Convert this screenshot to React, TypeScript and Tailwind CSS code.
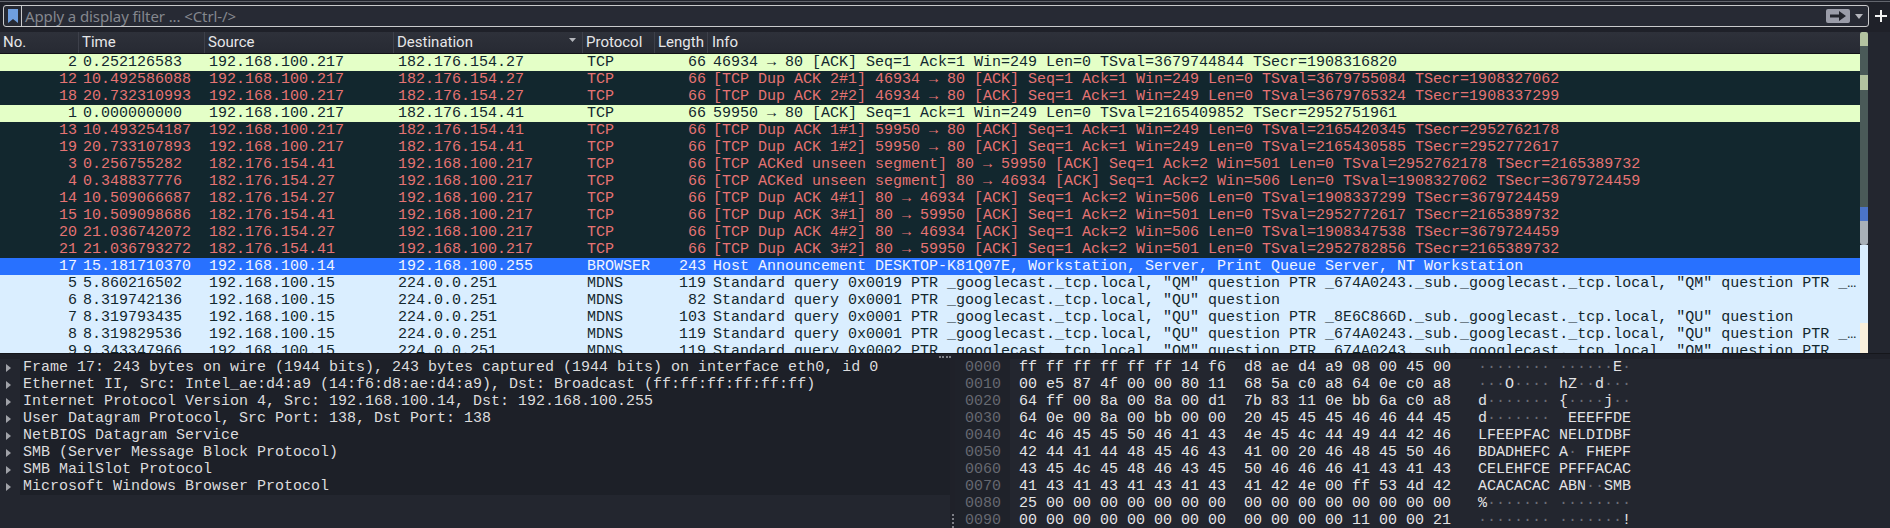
import React from 'react';

type Tone = 'ok' | 'bad' | 'sel' | 'mdns';

const TONES: Record<Tone, string> = {
  ok: 'bg-[#e4ffc7] text-[#12272e]',
  bad: 'bg-[#12272e] text-[#e57373]',
  sel: 'bg-[#2871ff] text-[#f0f4ff]',
  mdns: 'bg-[#daeeff] text-[#12272e]',
};

const ME = '192.168.100.217';
const A27 = '182.176.154.27';
const A41 = '182.176.154.41';
const MC = '224.0.0.251';
const S15 = '192.168.100.15';

const PACKETS: [Tone, string, string, string, string, string, string, string][] = [
  ['ok', '2', '0.252126583', ME, A27, 'TCP', '66', '46934 → 80 [ACK] Seq=1 Ack=1 Win=249 Len=0 TSval=3679744844 TSecr=1908316820'],
  ['bad', '12', '10.492586088', ME, A27, 'TCP', '66', '[TCP Dup ACK 2#1] 46934 → 80 [ACK] Seq=1 Ack=1 Win=249 Len=0 TSval=3679755084 TSecr=1908327062'],
  ['bad', '18', '20.732310993', ME, A27, 'TCP', '66', '[TCP Dup ACK 2#2] 46934 → 80 [ACK] Seq=1 Ack=1 Win=249 Len=0 TSval=3679765324 TSecr=1908337299'],
  ['ok', '1', '0.000000000', ME, A41, 'TCP', '66', '59950 → 80 [ACK] Seq=1 Ack=1 Win=249 Len=0 TSval=2165409852 TSecr=2952751961'],
  ['bad', '13', '10.493254187', ME, A41, 'TCP', '66', '[TCP Dup ACK 1#1] 59950 → 80 [ACK] Seq=1 Ack=1 Win=249 Len=0 TSval=2165420345 TSecr=2952762178'],
  ['bad', '19', '20.733107893', ME, A41, 'TCP', '66', '[TCP Dup ACK 1#2] 59950 → 80 [ACK] Seq=1 Ack=1 Win=249 Len=0 TSval=2165430585 TSecr=2952772617'],
  ['bad', '3', '0.256755282', A41, ME, 'TCP', '66', '[TCP ACKed unseen segment] 80 → 59950 [ACK] Seq=1 Ack=2 Win=501 Len=0 TSval=2952762178 TSecr=2165389732'],
  ['bad', '4', '0.348837776', A27, ME, 'TCP', '66', '[TCP ACKed unseen segment] 80 → 46934 [ACK] Seq=1 Ack=2 Win=506 Len=0 TSval=1908327062 TSecr=3679724459'],
  ['bad', '14', '10.509066687', A27, ME, 'TCP', '66', '[TCP Dup ACK 4#1] 80 → 46934 [ACK] Seq=1 Ack=2 Win=506 Len=0 TSval=1908337299 TSecr=3679724459'],
  ['bad', '15', '10.509098686', A41, ME, 'TCP', '66', '[TCP Dup ACK 3#1] 80 → 59950 [ACK] Seq=1 Ack=2 Win=501 Len=0 TSval=2952772617 TSecr=2165389732'],
  ['bad', '20', '21.036742072', A27, ME, 'TCP', '66', '[TCP Dup ACK 4#2] 80 → 46934 [ACK] Seq=1 Ack=2 Win=506 Len=0 TSval=1908347538 TSecr=3679724459'],
  ['bad', '21', '21.036793272', A41, ME, 'TCP', '66', '[TCP Dup ACK 3#2] 80 → 59950 [ACK] Seq=1 Ack=2 Win=501 Len=0 TSval=2952782856 TSecr=2165389732'],
  ['sel', '17', '15.181710370', '192.168.100.14', '192.168.100.255', 'BROWSER', '243', 'Host Announcement DESKTOP-K81Q07E, Workstation, Server, Print Queue Server, NT Workstation'],
  ['mdns', '5', '5.860216502', S15, MC, 'MDNS', '119', 'Standard query 0x0019 PTR _googlecast._tcp.local, "QM" question PTR _674A0243._sub._googlecast._tcp.local, "QM" question PTR _…'],
  ['mdns', '6', '8.319742136', S15, MC, 'MDNS', '82', 'Standard query 0x0001 PTR _googlecast._tcp.local, "QU" question'],
  ['mdns', '7', '8.319793435', S15, MC, 'MDNS', '103', 'Standard query 0x0001 PTR _googlecast._tcp.local, "QU" question PTR _8E6C866D._sub._googlecast._tcp.local, "QU" question'],
  ['mdns', '8', '8.319829536', S15, MC, 'MDNS', '119', 'Standard query 0x0001 PTR _googlecast._tcp.local, "QU" question PTR _674A0243._sub._googlecast._tcp.local, "QU" question PTR _…'],
  ['mdns', '9', '9.343347966', S15, MC, 'MDNS', '119', 'Standard query 0x0002 PTR _googlecast._tcp.local, "QM" question PTR _674A0243._sub._googlecast._tcp.local, "QM" question PTR _…'],
];

const DETAILS = [
  'Frame 17: 243 bytes on wire (1944 bits), 243 bytes captured (1944 bits) on interface eth0, id 0',
  'Ethernet II, Src: Intel_ae:d4:a9 (14:f6:d8:ae:d4:a9), Dst: Broadcast (ff:ff:ff:ff:ff:ff)',
  'Internet Protocol Version 4, Src: 192.168.100.14, Dst: 192.168.100.255',
  'User Datagram Protocol, Src Port: 138, Dst Port: 138',
  'NetBIOS Datagram Service',
  'SMB (Server Message Block Protocol)',
  'SMB MailSlot Protocol',
  'Microsoft Windows Browser Protocol',
];

const HEX = [
  ['0000', 'ff ff ff ff ff ff 14 f6', 'd8 ae d4 a9 08 00 45 00'],
  ['0010', '00 e5 87 4f 00 00 80 11', '68 5a c0 a8 64 0e c0 a8'],
  ['0020', '64 ff 00 8a 00 8a 00 d1', '7b 83 11 0e bb 6a c0 a8'],
  ['0030', '64 0e 00 8a 00 bb 00 00', '20 45 45 45 46 46 44 45'],
  ['0040', '4c 46 45 45 50 46 41 43', '4e 45 4c 44 49 44 42 46'],
  ['0050', '42 44 41 44 48 45 46 43', '41 00 20 46 48 45 50 46'],
  ['0060', '43 45 4c 45 48 46 43 45', '50 46 46 46 41 43 41 43'],
  ['0070', '41 43 41 43 41 43 41 43', '41 42 4e 00 ff 53 4d 42'],
  ['0080', '25 00 00 00 00 00 00 00', '00 00 00 00 00 00 00 00'],
  ['0090', '00 00 00 00 00 00 00 00', '00 00 00 00 11 00 00 21'],
];

// one span per byte, the non printable ones are dim dots
const Ascii = ({ bytes }: { bytes: string }) => (
  <span className="inline-block w-[72px]">
    {bytes.split(' ').map((b, i) => {
      const n = parseInt(b, 16);
      const printable = n >= 0x20 && n < 0x7f;
      return (
        <span key={i} className={printable ? 'text-[#e4e4e6]' : 'text-[#6a6d75]'}>
          {printable ? String.fromCharCode(n) : '·'}
        </span>
      );
    })}
  </span>
);

const HeadCell = ({ className, label }: { className: string; label: string }) => (
  <div className={`h-full border-r border-[#3d404a] pl-[3px] flex items-center shrink-0 ${className}`}>{label}</div>
);

export default function App() {
  return (
    <div className="h-screen w-full overflow-hidden bg-[#23262f] flex flex-col font-['Liberation_Mono',monospace] text-[15px] leading-[17px]">
      <div className="h-[1px] shrink-0" />
      <div className="h-[1px] shrink-0 bg-[#62656d]" />

      {/* filter bar */}
      <div className="h-[30px] shrink-0 flex pt-[3px] pl-[3px] pr-[2px] gap-[5px] bg-[#1f2129]">
        <div className="h-[22px] flex-1 flex items-center rounded-[3px] border border-[#c9cacc] bg-[#272a34]">
          <div className="w-[18px] h-full border-r border-[#c9cacc] flex items-center justify-center shrink-0">
            <svg width="10" height="14" viewBox="0 0 10 14">
              <path d="M0 0h10v14L5 10 0 14z" fill="#6f9fe0" />
            </svg>
          </div>
          <span className="ml-[3px] flex-1 font-['Noto_Sans',sans-serif] text-[15px] tracking-[-0.1px] text-[#84878e]">
            Apply a display filter ... &lt;Ctrl-/&gt;
          </span>
          <div className="w-[24px] h-[14px] rounded-[2px] bg-[#9a9ca8] flex items-center justify-center">
            <svg width="16" height="10" viewBox="0 0 16 10">
              <path d="M0 3.5h9V0l7 5-7 5V6.500H0z" fill="#22242c" />
            </svg>
          </div>
          <svg className="mx-[5px]" width="8" height="5" viewBox="0 0 8 5">
            <path d="M0 0h8L4 5z" fill="#b4b6bc" />
          </svg>
        </div>
        <svg className="mt-[4px] shrink-0" width="14" height="14" viewBox="0 0 14 14">
          <path d="M6 1h2v5h5v2H8v5H6V8H1V6h5z" fill="#f2f2f2" />
        </svg>
      </div>

      {/* packet list */}
      <div className="h-[321px] shrink-0 flex">
        <div className="w-[1860px] shrink-0 flex flex-col overflow-hidden">
          <div className="h-[22px] shrink-0 flex bg-gradient-to-b from-[#2e313a] to-[#272a33] border-b border-[#101116] font-['Roboto',sans-serif] text-[15px] text-[#e6e6e8]">
            <HeadCell className="w-[79px]" label="No." />
            <HeadCell className="w-[126px]" label="Time" />
            <HeadCell className="w-[189px]" label="Source" />
            <div className="w-[189px] h-full border-r border-[#3d404a] pl-[3px] pr-[6px] flex items-center justify-between shrink-0">
              <span>Destination</span>
              <svg className="mb-[5px]" width="7" height="4" viewBox="0 0 7 4">
                <path d="M0 0h7L3.500 4z" fill="#b4b6bc" />
              </svg>
            </div>
            <HeadCell className="w-[72px]" label="Protocol" />
            <HeadCell className="w-[53px]" label="Length" />
            <div className="h-full pl-[4px] flex items-center">Info</div>
          </div>
          {PACKETS.map(([tone, no, time, src, dst, proto, len, info]) => (
            <div key={no} className={`h-[17px] shrink-0 flex whitespace-pre ${TONES[tone]}`}>
              <div className="w-[79px] shrink-0 pr-[2px] text-right">{no}</div>
              <div className="w-[126px] shrink-0 pl-[4px]">{time}</div>
              <div className="w-[189px] shrink-0 pl-[4px]">{src}</div>
              <div className="w-[189px] shrink-0 pl-[4px]">{dst}</div>
              <div className="w-[72px] shrink-0 pl-[4px]">{proto}</div>
              <div className="w-[53px] shrink-0 pr-[2px] text-right">{len}</div>
              <div className="pl-[5px]">{info}</div>
            </div>
          ))}
        </div>
        {/* scrollbar with the coloring-rule minimap */}
        <div className="w-[8px] shrink-0 flex flex-col">
          <div className="h-[14px] rounded-t-[2px] bg-[#b3c3a0]" />
          <div className="h-[29px] bg-[#4a5a58]" />
          <div className="h-[15px] bg-[#b3c3a0]" />
          <div className="h-[117px] bg-[#4a5a58]" />
          <div className="h-[14px] bg-[#4b74c8]" />
          <div className="h-[24px] bg-[#a8b0b8] rounded-b-[3px]" />
          <div className="h-[78px] bg-[#daeeff]" />
          <div className="h-[30px] bg-[#faf0dc]" />
        </div>
      </div>

      {/* horizontal splitter */}
      <div className="h-[6px] shrink-0 bg-[#1f2129] border-t border-[#15161b] flex justify-center items-center">
        <div className="w-[12px] border-t-2 border-dotted border-[#7d7f86]" />
      </div>

      <div className="flex-1 min-h-0 flex">
        {/* packet details */}
        <div className="w-[950px] shrink-0 pl-[20px]">
          <div className="bg-[#1d2028] text-[#dcdcde] whitespace-pre">
            {DETAILS.map(line => (
              <div key={line} className="h-[17px] pl-[3px] relative">
                <svg className="absolute left-[-14px] top-[5px]" width="5" height="8" viewBox="0 0 5 8">
                  <path d="M0 0l5 4-5 4z" fill="#a0a2a8" />
                </svg>
                {line}
              </div>
            ))}
          </div>
        </div>

        {/* vertical splitter */}
        <div className="w-[5px] shrink-0 bg-[#1f2129] flex flex-col justify-end items-center">
          <div className="h-[14px] border-l-2 border-dotted border-[#7d7f86]" />
        </div>

        {/* packet bytes */}
        <div className="flex-1 flex whitespace-pre">
          <div className="w-[55px] shrink-0 pl-[10px] bg-[#1f222a] text-[#666971]">
            {HEX.map(r => (
              <div key={r[0]} className="h-[17px]">{r[0]}</div>
            ))}
          </div>
          <div className="pl-[9px] text-[#e4e4e6]">
            {HEX.map(r => (
              <div key={r[0]} className="h-[17px] flex">
                <span className="w-[459px] shrink-0">{r[1]}  {r[2]}</span>
                <Ascii bytes={r[1]} />
                <span className="w-[9px]" />
                <Ascii bytes={r[2]} />
              </div>
            ))}
          </div>
        </div>
      </div>
    </div>
  );
}
